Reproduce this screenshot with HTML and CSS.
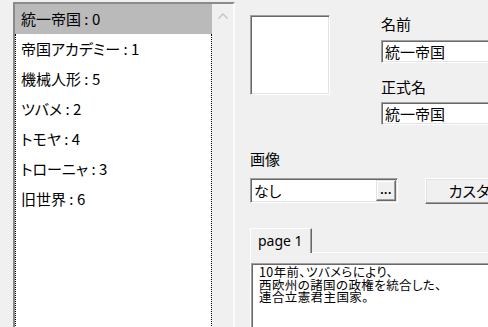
FILE: index.html
```html
<!DOCTYPE html>
<html lang="ja">
<head>
<meta charset="utf-8">
<title>国家エディタ</title>
<link rel="stylesheet" href="styles.css">
</head>
<body>
<div class="window">
  <div class="listbox">
    <div class="list">
      <div class="row selected">統一帝国 : 0</div>
      <div class="focus">
        <div class="row">帝国アカデミー : 1</div>
        <div class="row">機械人形 : 5</div>
        <div class="row">ツバメ : 2</div>
        <div class="row">トモヤ : 4</div>
        <div class="row">トローニャ : 3</div>
        <div class="row">旧世界 : 6</div>
      </div>
    </div>
    <div class="vscroll">
      <svg class="chev" width="10" height="6" viewBox="0 0 10 6"><polyline points="0.5,5.5 5,1 9.5,5.5" fill="none" stroke="#c4c4c4" stroke-width="1.4"/></svg>
    </div>
  </div>

  <div class="panel">
    <div class="top">
      <div class="picture sunken"></div>
      <div class="fields">
        <div class="label">名前</div>
        <div class="edit sunken">統一帝国</div>
        <div class="label second">正式名</div>
        <div class="edit sunken edit2">統一帝国</div>
      </div>
    </div>
    <div class="label img-label">画像</div>
    <div class="img-row">
      <div class="combo sunken"><span class="combo-text">なし</span><div class="dots">...</div></div>
      <div class="button">カスタム</div>
    </div>
    <div class="tabs">
      <div class="tab-strip">
        <div class="tab">page 1</div>
        <div class="tab-rest"></div>
      </div>
      <div class="tab-page">
        <div class="memo sunken">
          <div class="line">10年前、ツバメらにより、</div>
          <div class="line">西欧州の諸国の政権を統合した、</div>
          <div class="line">連合立憲君主国家。</div>
        </div>
      </div>
    </div>
  </div>
</div>
</body>
</html>
```
FILE: styles.css
```css
html, body {
  margin: 0;
  padding: 0;
  background: #f0f0f0;
  overflow: hidden;
}
body {
  width: 488px;
  height: 327px;
  font-family: "Noto Sans CJK JP", "Noto Sans", sans-serif;
  font-feature-settings: "palt";
  color: #000;
}
.window {
  display: flex;
  align-items: flex-start;
  padding: 2px 0 0 13px;
  width: 760px;
}

/* list box */
.listbox {
  display: flex;
  width: 222px;
  height: 420px;
  box-sizing: border-box;
  border-top: 2px solid #8a8a8a;
  border-left: 2px solid #8a8a8a;
  border-right: 2px solid #fbfbfb;
  background: #fff;
}
.list {
  width: 197px;
  display: flex;
  flex-direction: column;
}
.row {
  height: 30px;
  line-height: 30px;
  padding-left: 6px;
  font-size: 15px;
  white-space: nowrap;
}
.row.selected {
  background: #bababa;
}
.focus {
  flex: 1;
  border-left: 1px dotted #000;
  border-right: 1px dotted #000;
}
.focus .row {
  padding-left: 5px;
}
.vscroll {
  width: 21px;
  background: #f0f0f0;
  display: flex;
  justify-content: center;
  align-items: flex-start;
}
.chev {
  margin-top: 9px;
  margin-left: 1px;
}

/* common 3D sunken */
.sunken {
  box-sizing: border-box;
  background: #fff;
  border: 1px solid;
  border-color: #a0a0a0 #fff #fff #a0a0a0;
  box-shadow: inset 1px 1px 0 #696969, inset -1px -1px 0 #e3e3e3;
}

/* right panel */
.panel {
  margin-left: 15px;
  display: flex;
  flex-direction: column;
  align-items: flex-start;
}
.top {
  display: flex;
  align-items: flex-start;
}
.picture {
  width: 80px;
  height: 80px;
  margin-top: 13px;
}
.fields {
  margin-left: 51px;
  display: flex;
  flex-direction: column;
  align-items: flex-start;
  padding-top: 14px;
}
.label {
  font-size: 15px;
  line-height: 16px;
  height: 16px;
  white-space: nowrap;
}
.label.second {
  margin-top: 16px;
}
.edit {
  margin-top: 8px;
  width: 150px;
  height: 23px;
  line-height: 21px;
  padding-left: 3px;
  font-size: 15px;
  white-space: nowrap;
}
.edit2 {
  margin-top: 7px;
}
.img-label {
  margin-top: 26px;
}
.img-row {
  margin-top: 11px;
  display: flex;
  align-items: flex-start;
}
.combo {
  width: 148px;
  height: 25px;
  display: flex;
  align-items: stretch;
  padding: 1px 1px 1px 2px;
}
.combo-text {
  flex: 1;
  font-size: 15px;
  line-height: 22px;
  padding-left: 1px;
}
.dots {
  width: 20px;
  box-sizing: border-box;
  background: #f0f0f0;
  border: 1px solid;
  border-color: #e3e3e3 #696969 #696969 #e3e3e3;
  box-shadow: inset -1px -1px 0 #a0a0a0, inset 1px 1px 0 #fff;
  font-family: "Liberation Sans", sans-serif;
  font-weight: bold;
  font-size: 12px;
  line-height: 18px;
  text-align: center;
  letter-spacing: 0.5px;
}
.button {
  margin-left: 27px;
  width: 102px;
  height: 26px;
  box-sizing: border-box;
  background: #f0f0f0;
  border: 1px solid;
  border-color: #fff #696969 #696969 #fff;
  box-shadow: inset -1px -1px 0 #a0a0a0, inset 1px 1px 0 #e3e3e3;
  font-size: 15px;
  line-height: 23px;
  text-align: center;
  white-space: nowrap;
}

/* tabs */
.tabs {
  margin-top: 24px;
  width: 300px;
}
.tab-strip {
  display: flex;
  align-items: flex-end;
  height: 25px;
}
.tab {
  height: 25px;
  width: 62px;
  box-sizing: border-box;
  border-top: 1px solid #fff;
  border-left: 1px solid #fff;
  border-right: 1px solid #696969;
  box-shadow: inset -1px 0 0 #a0a0a0;
  font-family: "Noto Sans", sans-serif;
  font-size: 14px;
  line-height: 24px;
  padding-left: 7px;
  white-space: nowrap;
}
.tab-rest {
  flex: 1;
  border-bottom: 1px solid #fff;
}
.tab-page {
  border-left: 1px solid #fff;
  padding-top: 10px;
}
.memo {
  width: 280px;
  height: 80px;
  padding: 2px 0 0 7px;
  font-size: 12.5px;
  white-space: nowrap;
}
.line {
  height: 12.5px;
  line-height: 12.5px;
  letter-spacing: 0.4px;
}
```
